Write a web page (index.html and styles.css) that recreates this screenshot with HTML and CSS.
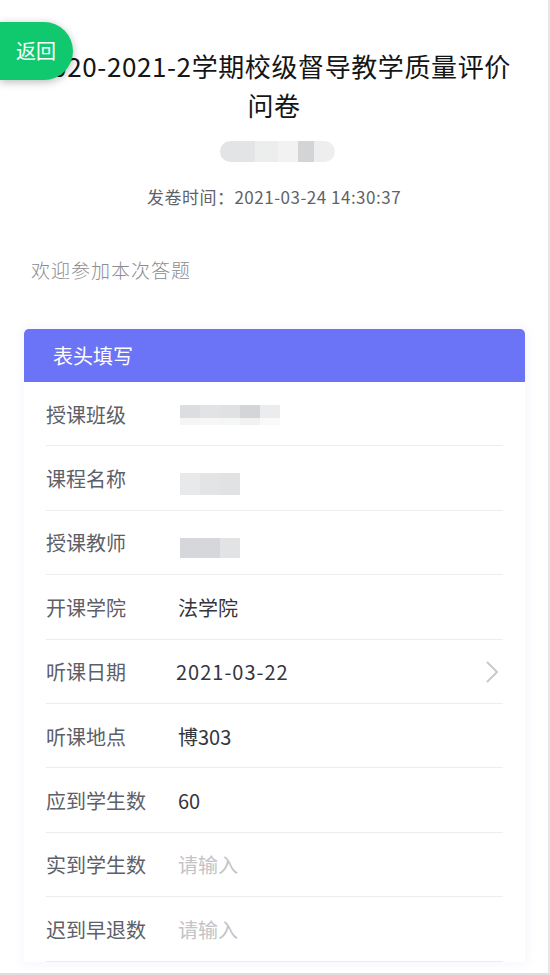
FILE: index.html
```html
<!DOCTYPE html>
<html lang="zh-CN">
<head>
<meta charset="utf-8">
<title>问卷</title>
<link rel="stylesheet" href="styles.css">
</head>
<body>
<div class="page">
  <a class="back-btn">返回</a>
  <h1 class="title">2020-2021-2学期校级督导教学质量评价问卷</h1>
  <div class="blur-name"></div>
  <div class="issue-time">发卷时间：2021-03-24 14:30:37</div>
  <div class="welcome">欢迎参加本次答题</div>

  <section class="card">
    <div class="card-head">表头填写</div>
    <div class="row">
      <span class="label">授课班级</span>
      <span class="value"><span class="mosaic mosaic-wide"></span></span>
    </div>
    <div class="row">
      <span class="label">课程名称</span>
      <span class="value"><span class="mosaic mosaic-a"></span></span>
    </div>
    <div class="row">
      <span class="label">授课教师</span>
      <span class="value"><span class="mosaic mosaic-b"></span></span>
    </div>
    <div class="row">
      <span class="label">开课学院</span>
      <span class="value">法学院</span>
    </div>
    <div class="row">
      <span class="label">听课日期</span>
      <span class="value value-date">2021-03-22</span>
      <svg class="chevron" width="14" height="24" viewBox="0 0 14 24"><path d="M2 2 L12 12 L2 22" fill="none" stroke="#c8c9cc" stroke-width="2"/></svg>
    </div>
    <div class="row">
      <span class="label">听课地点</span>
      <span class="value">博303</span>
    </div>
    <div class="row">
      <span class="label">应到学生数</span>
      <span class="value">60</span>
    </div>
    <div class="row">
      <span class="label">实到学生数</span>
      <span class="value placeholder">请输入</span>
    </div>
    <div class="row">
      <span class="label">迟到早退数</span>
      <span class="value placeholder">请输入</span>
    </div>
  </section>
</div>
</body>
</html>
```
FILE: styles.css
```css
* { box-sizing: border-box; }
html, body { margin: 0; padding: 0; background: #fff; }
body { font-family: "Noto Sans CJK SC", "Noto Sans", sans-serif; }

.page {
  position: relative;
  width: 550px;
  height: 975px;
  overflow: hidden;
  border-right: 2px solid #e6e6e8;
  border-bottom: 2px solid #dedee0;
  background: #fff;
}

.back-btn {
  position: absolute;
  top: 22px;
  left: 0;
  width: 73px;
  height: 58px;
  background: #10c96e;
  color: #fff;
  font-size: 20px;
  line-height: 58px;
  padding-left: 16px;
  border-radius: 0 29px 29px 0;
  box-shadow: 0 2px 8px rgba(0, 0, 0, 0.28);
  z-index: 2;
}

.title {
  margin: 0;
  padding: 46px 30px 0;
  font-size: 26px;
  line-height: 39px;
  font-weight: 400;
  letter-spacing: 0.6px;
  text-align: center;
  color: #151515;
}

.blur-name {
  width: 115px;
  height: 21px;
  margin: 17px auto 0;
  position: relative;
  left: 3px;
  border-radius: 11px;
  background: linear-gradient(to right,
    #e3e4e6 0 30%, #eceded 30% 50%, #f2f2f3 50% 68%, #d3d4d6 68% 82%, #eeeeef 82% 100%);
  filter: blur(0.6px);
}

.issue-time {
  margin-top: 23px;
  font-size: 17px;
  letter-spacing: 0.5px;
  line-height: 24px;
  text-align: center;
  color: #5f6269;
}

.welcome {
  margin-top: 47px;
  padding-left: 31px;
  font-size: 19px;
  letter-spacing: 1px;
  line-height: 28px;
  font-weight: 300;
  color: #8c8c90;
}

.card {
  margin: 45px 23px 0 24px;
  background: #fff;
  border-radius: 5px 5px 0 0;
  box-shadow: 0 0 9px 2px rgba(120, 120, 255, 0.07);
}

.card-head {
  height: 53px;
  padding-left: 29px;
  background: #6b73f6;
  color: #fff;
  font-size: 20px;
  line-height: 53px;
  border-radius: 5px 5px 0 0;
}

.row {
  display: flex;
  align-items: center;
  height: 64.4px;
  padding-top: 2px;
  margin: 0 22px;
  border-bottom: 1px solid #ebedf0;
}

.label {
  width: 132px;
  flex-shrink: 0;
  font-size: 20px;
  line-height: 28px;
  color: #5c6068;
}

.value {
  flex: 1;
  font-size: 20px;
  line-height: 28px;
  color: #33363c;
}

.value-date { letter-spacing: 1px; margin-left: -2px; }

.placeholder { color: #c2c4c8; }

.chevron { margin-right: 4px; flex-shrink: 0; }

.mosaic {
  display: block;
  margin-left: 2px;
}

.mosaic-wide {
  width: 100px;
  height: 20px;
  background:
    linear-gradient(to bottom, transparent 0 65%, rgba(255,255,255,0.7) 65% 100%),
    linear-gradient(to right, #dcdde0 0 20%, #e2e3e5 20% 40%, #e0e1e3 40% 60%, #d4d5d8 60% 80%, #ebecee 80% 100%);
}

.mosaic-a {
  width: 60px;
  height: 22px;
  margin-top: 10px;
  background: linear-gradient(to right, #e8e9eb 0 33%, #e3e4e6 33% 66%, #e1e2e4 66% 100%);
}

.mosaic-b {
  width: 60px;
  height: 20px;
  margin-top: 10px;
  background: linear-gradient(to right, #d6d7da 0 66%, #e2e3e5 66% 100%);
}
```
